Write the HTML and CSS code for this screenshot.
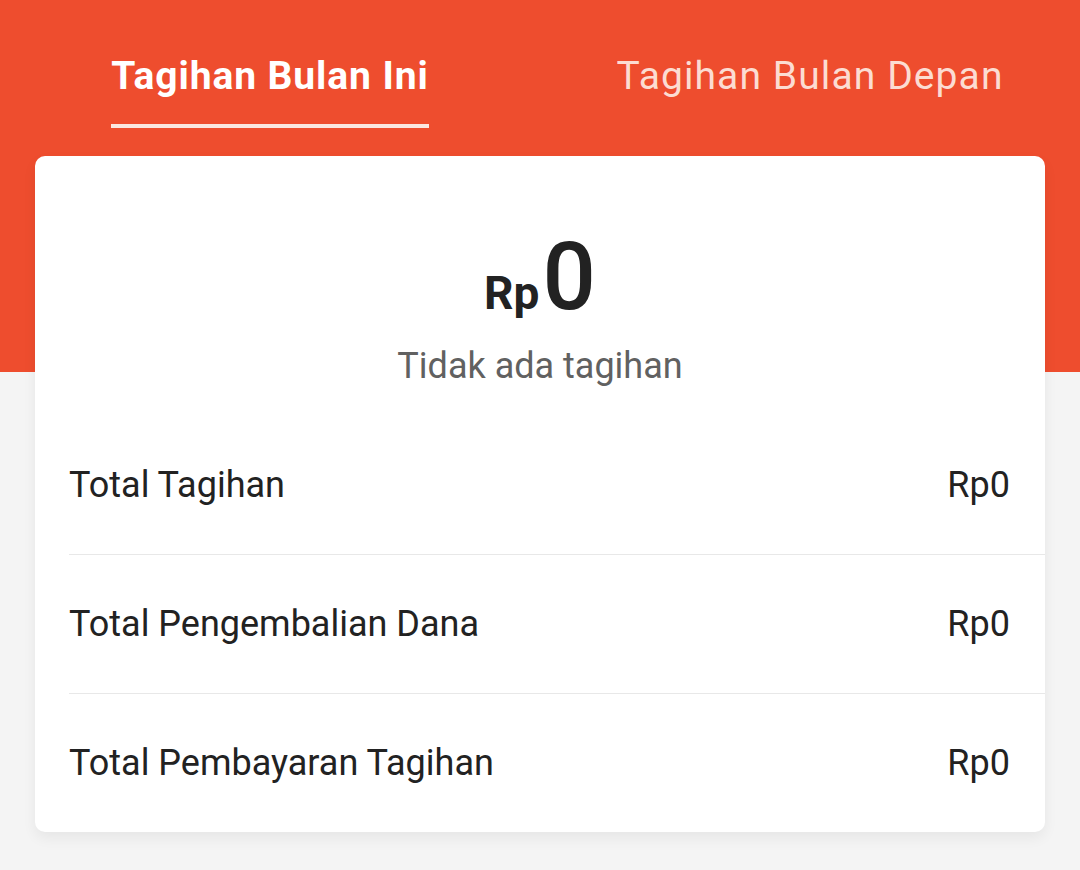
FILE: index.html
```html
<!DOCTYPE html>
<html lang="id">
<head>
<meta charset="utf-8">
<title>Tagihan</title>
<link rel="stylesheet" href="styles.css">
</head>
<body>
<div class="page">
  <div class="hero">
    <nav class="tabs">
      <div class="tab active"><span class="tab-label">Tagihan Bulan Ini</span></div>
      <div class="tab"><span class="tab-label">Tagihan Bulan Depan</span></div>
    </nav>
  </div>
  <main class="content">
    <section class="card">
      <div class="summary">
        <div class="amount"><span class="cur">Rp</span><span class="num">0</span></div>
        <div class="note">Tidak ada tagihan</div>
      </div>
      <div class="row"><span class="label">Total Tagihan</span><span class="value">Rp0</span></div>
      <div class="row"><span class="label">Total Pengembalian Dana</span><span class="value">Rp0</span></div>
      <div class="row"><span class="label">Total Pembayaran Tagihan</span><span class="value">Rp0</span></div>
    </section>
  </main>
</div>
</body>
</html>
```
FILE: styles.css
```css
* { box-sizing: border-box; }
html, body { margin: 0; padding: 0; }
body {
  font-family: Roboto, "Noto Sans", sans-serif;
  background: #f4f4f4;
  color: #222;
  width: 1080px;
  height: 870px;
  overflow: hidden;
}
.hero {
  background: #ee4d2e;
  height: 372px;
}
.tabs {
  display: grid;
  grid-template-columns: 1fr 1fr;
  height: 130px;
}
.tab {
  display: flex;
  justify-content: center;
  align-items: flex-start;
  padding-top: 52px;
}
.tab-label {
  font-size: 39px;
  letter-spacing: 1.1px;
  line-height: 48px;
  color: #fcdcd2;
  height: 76px;
}
.tab.active .tab-label {
  color: #fff;
  font-weight: 700;
  letter-spacing: 0.9px;
  border-bottom: 4px solid #fbe7e0;
}
.content {
  margin-top: -216px;
  padding: 0 35px;
}
.card {
  background: #fff;
  border-radius: 10px;
  box-shadow: 0 6px 14px rgba(0,0,0,0.06);
  display: flex;
  flex-direction: column;
}
.summary {
  height: 259px;
  display: flex;
  flex-direction: column;
  align-items: center;
  padding-top: 74px;
}
.amount {
  display: flex;
  align-items: baseline;
  color: #222;
  line-height: 1;
  gap: 3px;
}
.cur { font-size: 46px; font-weight: 700; }
.num { font-size: 94px; font-weight: 500; }
.note {
  margin-top: 21px;
  font-size: 36px;
  color: #616161;
}
.row {
  height: 139px;
  margin-left: 34px;
  padding-right: 35px;
  display: flex;
  justify-content: space-between;
  align-items: center;
  font-size: 36px;
  color: #222;
}
.row + .row { border-top: 1px solid #e8e8e8; }
```
